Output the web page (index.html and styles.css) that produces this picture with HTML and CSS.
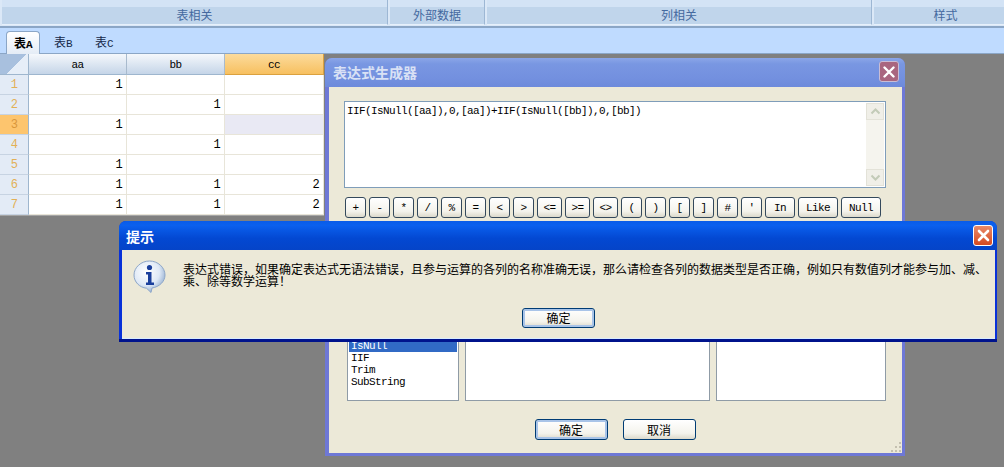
FILE: index.html
```html
<!DOCTYPE html>
<html lang="zh">
<head>
<meta charset="utf-8">
<title>表达式生成器</title>
<link rel="stylesheet" href="styles.css">
</head>
<body>
<div class="ribbon">
  <div class="group g1">表相关</div>
  <div class="group g2">外部数据</div>
  <div class="group g3">列相关</div>
  <div class="group g4">样式</div>
</div>
<div class="tabs">
  <div class="tab active">表<span class="mono">A</span></div>
  <div class="tab">表<span class="mono">B</span></div>
  <div class="tab">表<span class="mono">C</span></div>
</div>
<div class="sheet mono">
  <div class="corner"></div><div class="head">aa</div><div class="head">bb</div><div class="head on">cc</div>
  <div class="rh">1</div><div class="c">1</div><div class="c"></div><div class="c"></div>
  <div class="rh">2</div><div class="c"></div><div class="c">1</div><div class="c"></div>
  <div class="rh on">3</div><div class="c">1</div><div class="c"></div><div class="c cur"></div>
  <div class="rh">4</div><div class="c"></div><div class="c">1</div><div class="c"></div>
  <div class="rh">5</div><div class="c">1</div><div class="c"></div><div class="c"></div>
  <div class="rh">6</div><div class="c">1</div><div class="c">1</div><div class="c">2</div>
  <div class="rh">7</div><div class="c">1</div><div class="c">1</div><div class="c">2</div>
</div>

<section class="win builder">
  <header class="bar">
    <span class="cap">表达式生成器</span>
    <span class="x"><svg width="12" height="12" viewBox="0 0 12 12"><path d="M1.5 1.5l9 9M10.5 1.5l-9 9" stroke="#fff" stroke-width="2.4" stroke-linecap="round"/></svg></span>
  </header>
  <div class="pane">
    <div class="expr">
      <div class="expr-text mono">IIF(IsNull([aa]),0,[aa])+IIF(IsNull([bb]),0,[bb])</div>
      <div class="sb">
        <span class="sb-btn"><svg width="11" height="7" viewBox="0 0 11 7"><path d="M1.5 5.5l4-4 4 4" fill="none" stroke="#c3cbb8" stroke-width="2"/></svg></span>
        <span class="sb-btn"><svg width="11" height="7" viewBox="0 0 11 7"><path d="M1.5 1.5l4 4 4-4" fill="none" stroke="#c3cbb8" stroke-width="2"/></svg></span>
      </div>
    </div>
    <div class="keys mono">
      <button class="k">+</button><button class="k">-</button><button class="k">*</button><button class="k">/</button><button class="k">%</button><button class="k">=</button><button class="k">&lt;</button><button class="k">&gt;</button><button class="k w25">&lt;=</button><button class="k w25">&gt;=</button><button class="k w25">&lt;&gt;</button><button class="k">(</button><button class="k">)</button><button class="k">[</button><button class="k">]</button><button class="k">#</button><button class="k">'</button><button class="k w30">In</button><button class="k w40">Like</button><button class="k w40">Null</button>
    </div>
    <div class="lists mono">
      <div class="list l1">
        <div class="item sel">IsNull</div>
        <div class="item">IIF</div>
        <div class="item">Trim</div>
        <div class="item">SubString</div>
      </div>
      <div class="list l2"></div>
      <div class="list l3"></div>
    </div>
    <div class="foot">
      <button class="btn def">确定</button>
      <button class="btn">取消</button>
    </div>
    <svg class="grip" width="12" height="12" viewBox="0 0 12 12"><path d="M9 1h2v2H9zM5 5h2v2H5zM9 5h2v2H9zM1 9h2v2H1zM5 9h2v2H5zM9 9h2v2H9z" fill="#c4c0b0"/></svg>
  </div>
</section>

<section class="win alert">
  <header class="bar">
    <span class="cap">提示</span>
    <span class="x"><svg width="13" height="13" viewBox="0 0 13 13"><path d="M2 2l9 9M11 2l-9 9" stroke="#fff" stroke-width="2.6" stroke-linecap="round"/></svg></span>
  </header>
  <div class="pane">
    <div class="msg">
      <svg class="info" width="33" height="33" viewBox="0 0 33 33">
        <defs>
          <radialGradient id="bub" cx="40%" cy="35%" r="70%"><stop offset="0" stop-color="#fff"/><stop offset=".6" stop-color="#dfe9f6"/><stop offset="1" stop-color="#8ba7cc"/></radialGradient>
        </defs>
        <path d="M16.500 1C8 1 1 7.500 1 15c0 7 5.500 12.500 12.500 13.200L18 32.500l1-4.500C26.500 26.800 32 21.500 32 15 32 7.500 25 1 16.500 1z" fill="url(#bub)" stroke="#8da6c8"/>
        <circle cx="16.500" cy="7.500" r="2.600" fill="#1a3f9c"/>
        <path d="M13 12h5.500v10.500H21V25h-8v-2.500h2V14.500h-2z" fill="#1a3f9c"/>
      </svg>
      <p class="msg-text">表达式错误，如果确定表达式无语法错误，且参与运算的各列的名称准确无误，那么请检查各列的数据类型是否正确，例如只有数值列才能参与加、减、乘、除等数学运算！</p>
    </div>
    <div class="foot"><button class="btn def">确定</button></div>
  </div>
</section>
</body>
</html>
```
FILE: styles.css
```css
* { box-sizing: border-box; }
html, body { margin: 0; height: 467px; overflow: hidden; }
body {
  background: #808080;
  font-family: "Noto Sans CJK SC", sans-serif;
  font-size: 12px;
  line-height: 12px;
  color: #000;
  position: relative;
}
.mono { font-family: "Liberation Mono", "Noto Sans CJK SC", monospace; font-size: 11px; letter-spacing: -0.6px; }

.ribbon {
  display: flex;
  height: 28px;
  width: 1004px;
  overflow: hidden;
  padding-left: 2px;
  background: #dbe8f7;
  border-bottom: 2px solid #8ba6c6;
}
.group {
  flex: none;
  height: 25px;
  border-right: 1px solid #9db7d4;
  border-bottom: 1px solid #e6f0fb;
  margin-right: 2px;
  padding-top: 9px;
  text-align: center;
  color: #44699f;
  background: linear-gradient(#d3e3f5 0, #d3e3f5 7px, #c0d5eb 7px, #c0d5eb 100%);
}
.g1 { width: 386px; }
.g2 { width: 95px; }
.g3 { width: 385px; }
.g4 { width: 144px; }

.tabs {
  display: flex;
  align-items: flex-end;
  height: 26px;
  padding-left: 6px;
  background: #bfdbff;
  border-bottom: 1px solid #8ba6c6;
}
.tab {
  width: 34px;
  height: 22px;
  margin-right: 7px;
  padding-top: 5px;
  text-align: center;
  color: #15294a;
}
.tab.active {
  height: 23px;
  margin-right: 6px;
  margin-bottom: -1px;
  font-weight: 700;
  color: #000;
  background: linear-gradient(#fff, #e4ecf6);
  border: 1px solid #8ba6c6;
  border-bottom: 0;
  border-radius: 4px 4px 0 0;
}

.sheet {
  display: grid;
  grid-template-columns: 29px 98px 98px 99px;
  grid-template-rows: 21px repeat(7, 20px);
  width: 324px;
  background: #fff;
  border-bottom: 1px solid #a5a5a5;
}
.corner {
  background: linear-gradient(135deg, #a8c0de 0 55%, #e6eef8 55% 100%);
  border-right: 1px solid #9eb6ce;
  border-bottom: 1px solid #9eb6ce;
}
.head {
  display: flex;
  align-items: center;
  justify-content: center;
  padding-top: 1px;
  background: linear-gradient(#f5f8fc, #c5d5e8);
  border-right: 1px solid #a8bacd;
  border-bottom: 1px solid #9eb6ce;
}
.head.on { background: linear-gradient(#fcdb9c, #f7c060); border-color: #dba13e; }
.rh {
  display: flex;
  align-items: center;
  justify-content: center;
  padding-top: 1px;
  font-size: 12px;
  color: #e2b056;
  background: #e3ebf6;
  border-right: 1px solid #9eb6ce;
  border-bottom: 1px solid #c7d3e2;
}
.rh.on { background: #fdc56e; color: #d9963a; }
.c {
  display: flex;
  align-items: center;
  justify-content: flex-end;
  padding: 1px 4px 0 0;
  font-size: 12px;
  border-right: 1px solid #e8e5d9;
  border-bottom: 1px solid #e8e5d9;
}
.c.cur { background: #e9e9f4; }

.win { position: absolute; display: flex; flex-direction: column; }
.bar { display: flex; align-items: center; justify-content: space-between; flex: none; }
.cap { font-size: 14px; line-height: 16px; font-weight: 700; color: #fff; }
.x { display: flex; align-items: center; justify-content: center; width: 20px; height: 21px; border: 1px solid #fff; border-radius: 3px; }
.pane { position: relative; flex: 1; display: flex; flex-direction: column; background: #ece9d8; }

.builder {
  left: 325px;
  top: 58px;
  width: 580px;
  height: 398px;
  border-radius: 7px 7px 0 0;
  background: #6e78d6;
  padding: 0 3px 3px 4px;
}
.builder .bar {
  height: 29px;
  margin: 0 -3px 0 -4px;
  padding: 0 6px 2px 8px;
  border-radius: 7px 7px 0 0;
  background: linear-gradient(#8ba6e8, #7997e2 20%, #7390df 70%, #6d8adb);
}
.builder .cap { color: #d9e1f5; }
.builder .x { background: #a9667f; border-color: #c9bdd5; }
.builder .pane { padding: 14px 16px 12px 15px; }

.expr {
  display: flex;
  justify-content: space-between;
  width: 542px;
  height: 87px;
  padding: 1px;
  background: #fff;
  border: 1px solid #7f9db9;
}
.expr-text { padding: 2px 0 0 1px; line-height: 12px; }
.sb { display: flex; flex-direction: column; justify-content: space-between; width: 18px; background: #f5f4ee; }
.sb-btn { display: flex; align-items: center; justify-content: center; height: 17px; background: #f0efe8; border: 1px solid #e3e2d8; }

.keys { display: flex; gap: 3px; margin: 9px 0 0 1px; }
.k {
  width: 21px;
  height: 21px;
  padding: 0;
  font: inherit;
  letter-spacing: inherit;
  color: #000;
  background: linear-gradient(#fff, #f4f3ec 70%, #dcd9cb);
  border: 1px solid #34495c;
  border-radius: 3px;
}
.w25 { width: 25px; }
.w30 { width: 30px; }
.w40 { width: 40px; }

.lists { display: flex; gap: 6px; height: 101px; margin: 82px 0 0 3px; }
.list {
  display: flex;
  flex-direction: column;
  justify-content: flex-end;
  padding: 1px 1px 12px;
  background: #fff;
  border: 1px solid #8f9ba6;
}
.l1 { width: 112px; }
.l2 { width: 245px; }
.l3 { width: 170px; }
.item { height: 12px; padding-left: 2px; line-height: 12px; }
.item.sel { background: #316ac5; color: #fff; }

.foot { display: flex; justify-content: center; gap: 15px; margin-top: 18px; }
.btn {
  width: 73px;
  height: 21px;
  padding: 0;
  font: inherit;
  color: #000;
  background: linear-gradient(#fff, #f4f3ec 70%, #dcd9cb);
  border: 1px solid #003c74;
  border-radius: 3px;
}
.btn.def { box-shadow: inset 0 0 0 2px #a9c4e8; }
.grip { position: absolute; right: 0; bottom: 0; }

.alert {
  left: 119px;
  top: 221px;
  width: 878px;
  height: 121px;
  border-radius: 7px 7px 0 0;
  background: #0831d9;
  padding: 0 2px 3px 3px;
}
.alert .bar {
  height: 29px;
  margin: 0 -2px 0 -3px;
  padding: 0 4px 0 7px;
  border-radius: 7px 7px 0 0;
  background: linear-gradient(#0a5ce8, #0b60ee 15%, #0348d2 60%, #0544c8);
}
.alert .x { background: linear-gradient(#e88a6a, #d64a20); }
.alert .pane { padding-top: 10px; border-bottom: 1px solid #d8ecff; }
.alert { box-shadow: inset 0 -3px 0 #00138c; }
.msg { display: flex; gap: 17px; height: 38px; padding-left: 11px; }
.info { flex: none; }
.msg-text { margin: 3px 0 0; width: 812px; line-height: 12px; }
.alert .foot { margin-top: 10px; }
.alert .btn { height: 20px; }
```
